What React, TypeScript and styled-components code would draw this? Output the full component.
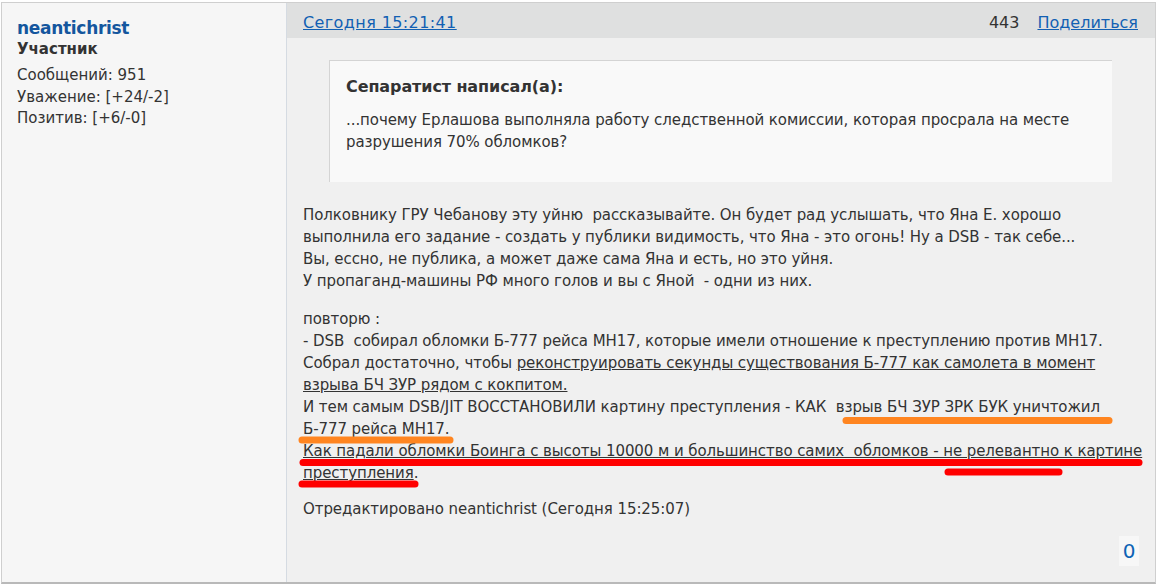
import React from "react";
import styled, { createGlobalStyle } from "styled-components";

const Global = createGlobalStyle`
  html, body { margin: 0; padding: 0; background: #ffffff; }
  body { font-family: "DejaVu Sans", Verdana, sans-serif; color: #333333; }
`;

const Post = styled.div`
  position: relative;
  box-sizing: border-box;
  width: 1155px;
  height: 582px;
  margin: 2px 0 0 1px;
  border: 1px solid #cfcfcf;
  border-bottom: 2px solid #b9b9b9;
  display: grid;
  grid-template-columns: 285px 1fr;
  background: #f0f0f0;
`;

const Sidebar = styled.div`
  background: #f6f6f6;
  border-right: 1px solid #d5dbe2;
  padding: 14px 15px;
  display: flex;
  flex-direction: column;
`;

const UserName = styled.div`
  font-size: 17px;
  font-weight: bold;
  color: #14569e;
  line-height: 22px;
  letter-spacing: -0.3px;
`;

const Rank = styled.div`
  font-size: 15px;
  font-weight: bold;
  color: #333;
  line-height: 20px;
  margin-bottom: 6px;
`;

const Stat = styled.div`
  font-size: 15px;
  color: #333;
  line-height: 21.5px;
`;

const Main = styled.div`
  display: flex;
  flex-direction: column;
  min-width: 0;
`;

const Header = styled.div`
  height: 35px;
  box-sizing: border-box;
  background: #dfe0e0;
  display: flex;
  align-items: center;
  justify-content: space-between;
  padding: 4px 17px 0 16px;
  font-size: 16px;
`;

const Link = styled.a<{ $spread?: number }>`
  color: #1260b3;
  text-decoration: underline;
  cursor: pointer;
  letter-spacing: ${(p) => p.$spread ?? 0}px;
`;

const HeaderRight = styled.div`
  display: flex;
  align-items: center;
  gap: 18px;
  color: #333;
`;

const Body = styled.div`
  flex: 1;
  display: flex;
  flex-direction: column;
  padding: 22px 15px 0 16px;
  font-size: 15px;
  line-height: 22px;
  color: #333;
  letter-spacing: -0.08px;
`;

const Quote = styled.div`
  margin: 0 28px 0 26px;
  background: #f9f9f9;
  border-top: 1px solid #d4d4d4;
  border-left: 1px solid #d4d4d4;
  padding: 15px 16px 29px 16px;
`;

const QuoteTitle = styled.div`
  font-size: 16px;
  font-weight: bold;
  line-height: 22px;
  margin-bottom: 11px;
  letter-spacing: -0.1px;
`;

const Para = styled.p<{ $gap?: number }>`
  margin: ${(p) => p.$gap ?? 0}px 0 0 0;
  white-space: nowrap;
`;

const U = styled.span`
  text-decoration: underline;
`;

const Footer = styled.div`
  flex: 1;
  display: flex;
  justify-content: flex-end;
  align-items: flex-end;
  padding-bottom: 16px;
`;

const Likes = styled.div`
  width: 20px;
  height: 30px;
  background: #f7f7f7;
  color: #0d63b5;
  font-size: 20px;
  display: flex;
  align-items: center;
  justify-content: center;
  margin-right: 1px;
`;

const Marks = styled.svg`
  position: absolute;
  left: -2px;
  top: -3px;
  width: 1158px;
  height: 588px;
  pointer-events: none;
  overflow: visible;
`;

export default function App() {
  return (
    <>
      <Global />
      <Post>
        <Sidebar>
          <UserName>neantichrist</UserName>
          <Rank>Участник</Rank>
          <Stat>Сообщений: 951</Stat>
          <Stat>Уважение: [+24/-2]</Stat>
          <Stat>Позитив: [+6/-0]</Stat>
        </Sidebar>
        <Main>
          <Header>
            <Link $spread={0.4}>Сегодня 15:21:41</Link>
            <HeaderRight>
              <span>443</span>
              <Link>Поделиться</Link>
            </HeaderRight>
          </Header>
          <Body>
            <Quote>
              <QuoteTitle>Сепаратист написал(а):</QuoteTitle>
              <div>
                ...почему Ерлашова выполняла работу следственной комиссии, которая просрала на месте
                <br />
                разрушения 70% обломков?
              </div>
            </Quote>
            <Para $gap={22}>
              Полковнику ГРУ Чебанову эту уйню&nbsp; рассказывайте. Он будет рад услышать, что Яна Е. хорошо
              <br />
              выполнила его задание - создать у публики видимость, что Яна - это огонь! Ну а DSB - так себе...
              <br />
              Вы, ессно, не публика, а может даже сама Яна и есть, но это уйня.
              <br />
              У пропаганд-машины РФ много голов и вы с Яной&nbsp; - одни из них.
            </Para>
            <Para $gap={16}>
              повторю :
              <br />
              - DSB&nbsp; собирал обломки Б-777 рейса МН17, которые имели отношение к преступлению против МН17.
              <br />
              Собрал достаточно, чтобы <U>реконструировать секунды существования Б-777 как самолета в момент</U>
              <br />
              <U>взрыва БЧ ЗУР рядом с кокпитом.</U>
              <br />
              И тем самым DSB/JIT ВОССТАНОВИЛИ картину преступления - КАК&nbsp; взрыв БЧ ЗУР ЗРК БУК уничтожил
              <br />
              Б-777 рейса МН17.
              <br />
              <U>Как падали обломки Боинга с высоты 10000 м и большинство самих&nbsp; обломков - не релевантно к картине</U>
              <br />
              <U>преступления</U>.
            </Para>
            <Para $gap={14}>Отредактировано neantichrist (Сегодня 15:25:07)</Para>
            <Footer>
              <Likes>0</Likes>
            </Footer>
          </Body>
        </Main>
        <Marks viewBox="0 0 1158 588">
          <g strokeLinecap="round" fill="none" strokeWidth={7}>
            <line x1={846} y1={420.5} x2={1109} y2={420.5} stroke="#ff8520" />
            <line x1={302} y1={440} x2={450} y2={440} stroke="#ff8520" />
            <line x1={303} y1={462.5} x2={1139} y2={462.5} stroke="#ff0000" />
            <line x1={948} y1={472} x2={1059} y2={472} stroke="#ff0000" />
            <line x1={302} y1={484} x2={415} y2={484} stroke="#ff0000" />
          </g>
        </Marks>
      </Post>
    </>
  );
}
